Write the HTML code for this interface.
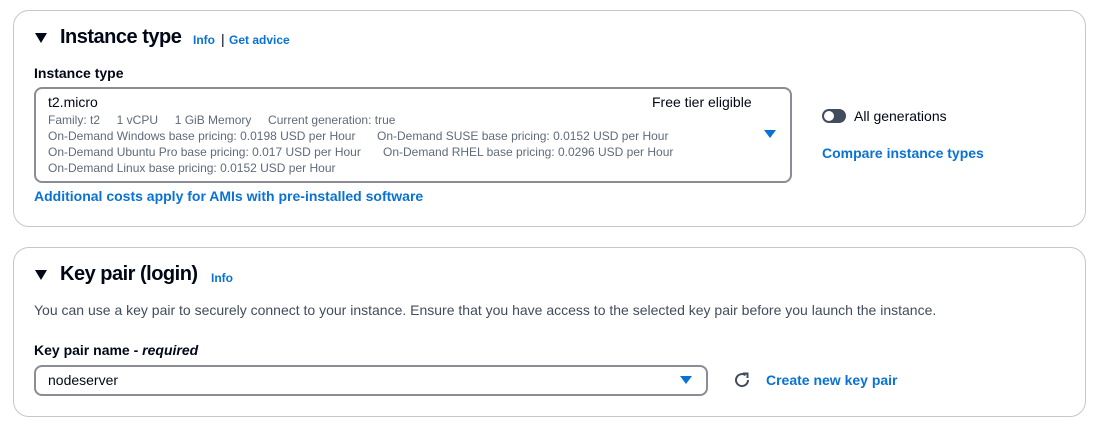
<!DOCTYPE html>
<html><head><style>
body{margin:0;width:1098px;height:424px;background:#fff;font-family:"Liberation Sans",sans-serif;color:#000716;position:relative;overflow:hidden}
.a{position:absolute;white-space:nowrap}
.panel{position:absolute;border:1px solid #c6c6cd;border-radius:16px;background:#fff}
.lk{color:#0972d3;font-weight:bold}
.sm{font-size:12px;color:#5f6b7a}
.tri{width:0;height:0;border-left:6px solid transparent;border-right:6px solid transparent;border-top:8px solid #0972d3;position:absolute}
.htri{width:0;height:0;border-left:6.5px solid transparent;border-right:6.5px solid transparent;border-top:10px solid #000716;position:absolute}
.h{font-size:20px;font-weight:bold;letter-spacing:-0.5px}
</style></head><body>
<div class="panel" style="left:13px;top:10px;width:1071px;height:215px"></div>
<div class="htri" style="left:35px;top:33px"></div>
<div class="a h" style="left:60px;top:26px">Instance type</div>
<div class="a lk" style="left:193px;top:33px;font-size:12px">Info</div>
<div class="a" style="left:221px;top:31px;font-size:14px">|</div>
<div class="a lk" style="left:229px;top:33px;font-size:12px">Get advice</div>
<div class="a" style="left:34px;top:65px;font-size:14px;font-weight:bold">Instance type</div>
<div style="position:absolute;left:34px;top:87px;width:754px;height:92px;border:2px solid #8c8c94;border-radius:8px"></div>
<div class="a" style="left:48px;top:94px;font-size:14px">t2.micro</div>
<div class="a" style="left:652px;top:94px;font-size:14px">Free tier eligible</div>
<div class="a sm" style="left:48px;top:113px">Family: t2&nbsp;&nbsp;&nbsp;&nbsp;&nbsp;1 vCPU&nbsp;&nbsp;&nbsp;&nbsp;&nbsp;1 GiB Memory&nbsp;&nbsp;&nbsp;&nbsp;&nbsp;Current generation: true</div>
<div class="a sm" style="left:48px;top:129px">On-Demand Windows base pricing: 0.0198 USD per Hour</div>
<div class="a sm" style="left:377px;top:129px">On-Demand SUSE base pricing: 0.0152 USD per Hour</div>
<div class="a sm" style="left:48px;top:145px">On-Demand Ubuntu Pro base pricing: 0.017 USD per Hour</div>
<div class="a sm" style="left:383px;top:145px">On-Demand RHEL base pricing: 0.0296 USD per Hour</div>
<div class="a sm" style="left:48px;top:161px">On-Demand Linux base pricing: 0.0152 USD per Hour</div>
<div class="tri" style="left:764px;top:130px"></div>
<div class="a lk" style="left:34px;top:188px;font-size:14px">Additional costs apply for AMIs with pre-installed software</div>
<div style="position:absolute;left:822px;top:109px;width:24px;height:14px;border-radius:8px;background:#414d5c"></div>
<div style="position:absolute;left:824px;top:111px;width:10px;height:10px;border-radius:50%;background:#fff"></div>
<div class="a" style="left:854px;top:108px;font-size:14px">All generations</div>
<div class="a lk" style="left:822px;top:145px;font-size:14px">Compare instance types</div>

<div class="panel" style="left:13px;top:247px;width:1071px;height:168px"></div>
<div class="htri" style="left:35px;top:270px"></div>
<div class="a h" style="left:60px;top:263px">Key pair (login)</div>
<div class="a lk" style="left:211px;top:271px;font-size:12px">Info</div>
<div class="a" style="left:34px;top:302px;font-size:14px;color:#414d5c">You can use a key pair to securely connect to your instance. Ensure that you have access to the selected key pair before you launch the instance.</div>
<div class="a" style="left:34px;top:342px;font-size:14px;font-weight:bold">Key pair name - <i>required</i></div>
<div style="position:absolute;left:34px;top:365px;width:670px;height:27px;border:2px solid #8c8c94;border-radius:8px"></div>
<div class="a" style="left:48px;top:372px;font-size:14px">nodeserver</div>
<div class="tri" style="left:680px;top:376px"></div>
<svg class="a" style="left:733px;top:371px" width="18" height="18" viewBox="0 0 18 18"><path d="M15 9A6 6 0 1 1 12.5 4.2" fill="none" stroke="#414d5c" stroke-width="2"/><path d="M10 2.5L14.5 2.5L14.5 7" fill="none" stroke="#414d5c" stroke-width="2"/></svg>
<div class="a lk" style="left:766px;top:372px;font-size:14px">Create new key pair</div>
</body></html>
